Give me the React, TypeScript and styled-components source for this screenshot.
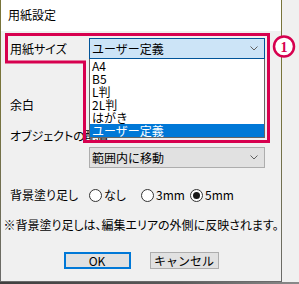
import React from 'react';
import styled, { createGlobalStyle } from 'styled-components';

const GlobalStyle = createGlobalStyle`
  html, body {
    margin: 0;
    padding: 0;
  }
  body {
    background: #f0f0f0;
    font-family: "Noto Sans CJK JP", "Noto Sans", sans-serif;
    font-size: 12px;
    color: #000;
  }
`;

const Page = styled.div`
  position: relative;
  width: 299px;
  height: 284px;
  display: flex;
  flex-direction: column;
  background: #f0f0f0;
  overflow: hidden;
`;

const Window = styled.div`
  width: 282px;
  height: 282px;
  box-sizing: border-box;
  border-left: 1px solid;
  border-right: 1px solid;
  border-bottom: 1px solid #6a6a6a;
  border-image: linear-gradient(to bottom, #78743a, #78743a 35%, #6a6a6a) 1;
  display: flex;
  flex-direction: column;
  background: #f0f0f0;
`;

const Shade = styled.div`
  flex: 1;
  background: linear-gradient(to right, #3f3f3f, #5a5a5a 60%, #8a8a8a);
`;

const TitleBar = styled.div`
  height: 31px;
  box-sizing: border-box;
  padding: 8px 0 0 7px;
  background: #fff;
  font-size: 12px;
  line-height: 13px;
`;

const Client = styled.div`
  flex: 1;
  display: flex;
  flex-direction: column;
  padding-top: 7px;
  font-feature-settings: "palt";
`;

const Row = styled.div<{ $top?: number; $height?: number }>`
  display: flex;
  align-items: center;
  padding-left: 9px;
  margin-top: ${(p) => p.$top ?? 0}px;
  height: ${(p) => p.$height ?? 21}px;
`;

const Label = styled.div`
  width: 79px;
  flex-shrink: 0;
  white-space: nowrap;
  line-height: 14px;
`;

const WideLabel = styled.div`
  white-space: nowrap;
  line-height: 14px;
`;

const ComboWrap = styled.div<{ $indent?: number }>`
  position: relative;
  margin-left: ${(p) => p.$indent ?? 0}px;
`;

const Combo = styled.div<{ $focused?: boolean }>`
  width: 176px;
  height: 21px;
  box-sizing: border-box;
  display: flex;
  align-items: center;
  justify-content: space-between;
  padding: 0 6px 0 2px;
  border: 1px solid ${(p) => (p.$focused ? '#005499' : '#adadad')};
  background: ${(p) => (p.$focused ? '#cce4f7' : '#e1e1e1')};
  font-feature-settings: normal;
  line-height: 14px;
`;

const DropList = styled.ul`
  position: absolute;
  top: 100%;
  left: 0;
  z-index: 2;
  width: 176px;
  margin: 0;
  padding: 0;
  list-style: none;
  box-sizing: border-box;
  border: 1px solid #646464;
  border-top: none;
  background: #fff;
  font-feature-settings: normal;
`;

const DropItem = styled.li<{ $selected?: boolean }>`
  height: 13px;
  line-height: 13px;
  padding-left: 2px;
  white-space: nowrap;
  background: ${(p) => (p.$selected ? '#0078d7' : 'transparent')};
  color: ${(p) => (p.$selected ? '#fff' : '#000')};
`;

const RadioGroup = styled.div`
  display: flex;
  align-items: center;
`;

const RadioItem = styled.label<{ $width?: number }>`
  display: flex;
  align-items: center;
  gap: 2px;
  width: ${(p) => (p.$width ? `${p.$width}px` : 'auto')};
  line-height: 14px;
`;

const RadioDot = styled.span<{ $checked?: boolean }>`
  width: 13px;
  height: 13px;
  box-sizing: border-box;
  border-radius: 50%;
  border: 1px solid #333;
  background: #fff;
  display: flex;
  align-items: center;
  justify-content: center;
  &::after {
    content: '';
    width: 7px;
    height: 7px;
    border-radius: 50%;
    background: ${(p) => (p.$checked ? '#1a1a1a' : 'transparent')};
  }
`;

const Note = styled.div`
  margin-top: 13px;
  height: 14px;
  line-height: 14px;
  text-align: center;
  white-space: nowrap;
`;

const ButtonBar = styled.div`
  margin-top: 20px;
  display: flex;
  justify-content: center;
  gap: 19px;
`;

const Button = styled.button<{ $default?: boolean; $width: number }>`
  width: ${(p) => p.$width}px;
  height: 17px;
  box-sizing: border-box;
  padding: 0;
  margin: 0;
  background: #e1e1e1;
  border: ${(p) => (p.$default ? '2px solid #0078d7' : '1px solid #adadad')};
  font-family: "Noto Sans CJK JP", "Noto Sans", sans-serif;
  font-size: 12px;
  line-height: 13px;
  color: #000;
`;

const Overlay = styled.svg`
  position: absolute;
  left: 0;
  top: 0;
  z-index: 3;
  pointer-events: none;
`;

const Chevron = () => (
  <svg width="8" height="5" viewBox="0 0 8 5">
    <path d="M0.5 0.5 L4 4 L7.5 0.5" fill="none" stroke="#606060" strokeWidth="1" />
  </svg>
);

const sizes = ['A4', 'B5', 'L判', '2L判', 'はがき', 'ユーザー定義'];

export default function App() {
  return (
    <>
      <GlobalStyle />
      <Page>
        <Window>
          <TitleBar>用紙設定</TitleBar>
          <Client>
            <Row>
              <Label>用紙サイズ</Label>
              <ComboWrap>
                <Combo $focused>
                  <span>ユーザー定義</span>
                  <Chevron />
                </Combo>
                <DropList>
                  {sizes.map((s) => (
                    <DropItem key={s} $selected={s === 'ユーザー定義'}>
                      {s}
                    </DropItem>
                  ))}
                </DropList>
              </ComboWrap>
            </Row>
            <Row $top={35}>
              <Label>余白</Label>
            </Row>
            <Row $top={14} $height={14}>
              <WideLabel>オブジェクトの配置</WideLabel>
            </Row>
            <Row $top={4}>
              <ComboWrap $indent={79}>
                <Combo>
                  <span>範囲内に移動</span>
                  <Chevron />
                </Combo>
              </ComboWrap>
            </Row>
            <Row $top={17} $height={20}>
              <Label>背景塗り足し</Label>
              <RadioGroup>
                <RadioItem $width={52}>
                  <RadioDot />
                  なし
                </RadioItem>
                <RadioItem $width={49}>
                  <RadioDot />
                  3mm
                </RadioItem>
                <RadioItem>
                  <RadioDot $checked />
                  5mm
                </RadioItem>
              </RadioGroup>
            </Row>
            <Note>※背景塗り足しは、編集エリアの外側に反映されます。</Note>
            <ButtonBar>
              <Button $default $width={67}>OK</Button>
              <Button $width={69}>キャンセル</Button>
            </ButtonBar>
          </Client>
        </Window>
        <Shade />
        <Overlay width="299" height="284" viewBox="0 0 299 284">
          <path
            d="M6.5 34.5 H268.5 V141.5 H84.5 V62 H6.5 Z"
            fill="none"
            stroke="#d7004f"
            strokeWidth="3"
          />
          <circle cx="284" cy="46.5" r="10" fill="#fff" stroke="#d7004f" strokeWidth="2.5" />
          <text
            x="284"
            y="51.5"
            textAnchor="middle"
            fontFamily="Liberation Serif, serif"
            fontWeight="bold"
            fontSize="14"
            fill="#d7004f"
          >
            1
          </text>
        </Overlay>
      </Page>
    </>
  );
}
